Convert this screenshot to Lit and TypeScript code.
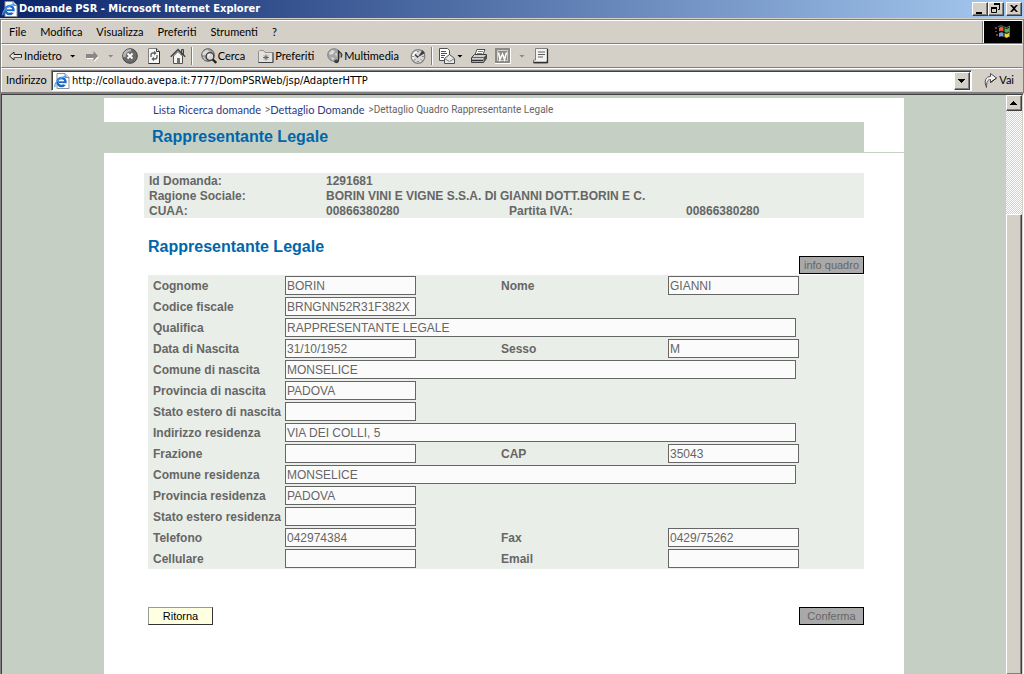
import { LitElement, html, css, svg, nothing, TemplateResult } from 'lit';
import { customElement, property } from 'lit/decorators.js';

type IconName =
  | 'ie' | 'back' | 'forward' | 'stop' | 'refresh' | 'home' | 'search' | 'favorites'
  | 'media' | 'history' | 'mail' | 'print' | 'word' | 'note' | 'go' | 'windows'
  | 'min' | 'restore' | 'close' | 'down' | 'up';

const ICONS: Record<IconName, TemplateResult> = {
  ie: svg`
    <path d="M3 0.5h8l4 4v11H3z" fill="#fff" stroke="#8a8f99"/>
    <path d="M11 0.5v4h4" fill="#d9dde6" stroke="#8a8f99"/>
    <circle cx="7.5" cy="9" r="4" fill="#fff" stroke="#1a66c8" stroke-width="2.4"/>
    <path d="M5 9.2h6.6" stroke="#1a66c8" stroke-width="1.8"/>
    <path d="M9.6 10.2h3v1.6h-3z" fill="#fff"/>
    <path d="M1.2 14.2C-.6 11.5 4.5 4.5 12.5 3.2" fill="none" stroke="#4aa0f0" stroke-width="1.3"/>`,
  back: svg`
    <path d="M2.5 8L7 4v2.500h7.500v3H7V12z" fill="#e8e6e0" stroke="#202020"/>
    <path d="M7 9.500h7.500" stroke="#606060"/>`,
  forward: svg`
    <path d="M15 9L10 14v-3H3v-3" fill="#fff"/>
    <path d="M14 8L9.500 3v3H2v4h7.500v3z" fill="#8a8884"/>`,
  stop: svg`
    <circle cx="8" cy="8" r="7.300" fill="#6b6b6b" stroke="#404040"/>
    <path d="M2.500 9A5.500 5.500 0 0 1 9 2.500" fill="none" stroke="#b8b8b8" stroke-width="2.500"/>
    <path d="M5.500 5.500l5 5m0-5l-5 5" stroke="#fff" stroke-width="1.800"/>`,
  refresh: svg`
    <path d="M2.500 .5h8l3 3v12h-11z" fill="#f6f6f4" stroke="#808080"/>
    <path d="M13.500 3.500v12h-11M10.500 .5v3h3" fill="none" stroke="#303030"/>
    <path d="M5 9V7a2 2 0 0 1 2-2h1.500M11 7v2a2 2 0 0 1-2 2H7.500" fill="none" stroke="#606060" stroke-width="1.300"/>
    <path d="M8 2.800L10.600 5 8 7.200zM8 8.800L5.400 11 8 13.200z" fill="#606060"/>`,
  home: svg`
    <path d="M3.500 8v7.500h9V8L8 3.500z" fill="#f4f4f2" stroke="#505050"/>
    <path d="M11.500 1.500h2v5h-2z" fill="#a0a0a0" stroke="#404040"/>
    <path d="M.8 8.800L8 1.600l7.200 7.200" fill="none" stroke="#404040" stroke-width="1.400"/>
    <path d="M7 10h3v5.500H7z" fill="#707070"/>`,
  search: svg`
    <circle cx="7" cy="7" r="6.300" fill="#9a9a9a" stroke="#606060"/>
    <path d="M2 4.500l4-2.500 2 1.500-3 3-3 .5zM2.500 9l2 3" fill="#d8d8d8" stroke="#d8d8d8"/>
    <circle cx="9" cy="8.500" r="3.800" fill="#d8d8d8" stroke="#404040" stroke-width="1.300"/>
    <path d="M7 8.500A2 2 0 0 1 9 6.500" fill="none" stroke="#fff"/>
    <path d="M11.800 11.500l3.400 3.500" stroke="#202020" stroke-width="2.400"/>`,
  favorites: svg`
    <path d="M.5 14.500v-11l1-1h4l1.500 2h8v10z" fill="#e4e2dc" stroke="#909090"/>
    <path d="M.5 14.500h14.500v-10" fill="none" stroke="#404040"/>
    <path d="M8 6.500v6M5 9.500h6M6 7.500l4 4m0-4l-4 4" stroke="#606060" stroke-width=".9"/>`,
  media: svg`
    <circle cx="7" cy="7" r="6.300" fill="#a6a6a6" stroke="#808080"/>
    <path d="M2 5l3-3 3 1-2 3-3 1zM4 9l3 1-1 3zM8 6l2-1-.5 4z" fill="#dcdcdc"/>
    <path d="M11.500 13V3l1.500 1.500c2 1 2.500 2.500 1 5" fill="none" stroke="#303030" stroke-width="1.200"/>
    <ellipse cx="9.500" cy="13.300" rx="2.300" ry="1.900" fill="#404040"/>`,
  history: svg`
    <circle cx="8" cy="8.500" r="6.800" fill="#d8d8d8" stroke="#808080" stroke-width="1.200"/>
    <path d="M3.500 11a5 5 0 0 1 3-7" fill="none" stroke="#fff" stroke-width="1.500"/>
    <path d="M8 3v1M8 13v1M2.500 8.500h1M12.500 8.500h1M4 12.500l1-1M12 12.500l-1-1" stroke="#404040"/>
    <path d="M7.500 9.500L12.500 2l2.500 3z" fill="#404040"/>
    <path d="M5 6.500l3 3" stroke="#303030" stroke-width="1.300"/>`,
  mail: svg`
    <path d="M.5 .5h8l2 2v10H.5z" fill="#fff" stroke="#505050"/>
    <path d="M2 3.500h5M2 5.500h6M2 7.500h4M2 9.500h3" stroke="#505050"/>
    <path d="M5.500 10.500l5-4 5 4v5h-10z" fill="#e8e8e8" stroke="#505050"/>
    <path d="M5.500 10.500l5 3 5-3" fill="none" stroke="#808080"/>`,
  print: svg`
    <path d="M4 6.500L6 1.500h8l-2 5z" fill="#fff" stroke="#505050"/>
    <path d="M7 3.500h5M6 5.500h5" stroke="#808080"/>
    <path d="M.5 9.500l3-3h12v4l-3 4H.5z" fill="#d0d0d0" stroke="#404040"/>
    <path d="M12.500 9.500l3-3v4l-3 4z" fill="#505050"/>
    <path d="M.5 9.500h12" stroke="#606060"/>
    <path d="M1 12.500h11" stroke="#303030" stroke-width="1.500"/>`,
  word: svg`
    <path d="M0 0h15v15H0z" fill="#8c8a86"/>
    <path d="M15.500 0v15.500H0" fill="none" stroke="#fff"/>
    <path d="M2.500 2.500h10v10h-10z" fill="none" stroke="#d4d0c8"/>
    <path d="M3.500 4.500l1.500 7L7.500 6l2 5.500 2-7" fill="none" stroke="#fff" stroke-width="1.600"/>`,
  note: svg`
    <path d="M2.500 .5h12v11.500l-1 3H.5v-3h2z" fill="#f2f2f0" stroke="#808080"/>
    <path d="M14.500 1v13.500H.5" fill="none" stroke="#303030" stroke-width="1.300"/>
    <path d="M5 4h7M5 6.500h7M5 9h5" stroke="#606060"/>`,
  go: svg`
    <path d="M4.500 15.500C1.500 9 4 4.500 8.500 4.500v-3L14.500 6l-6 4.500v-3c-3 0-4 2.500-4 8z" fill="#f4f4f4" stroke="#505050"/>
    <path d="M8.500 10.500l6-4.500" stroke="#202020"/>`,
  windows: svg`
    <path d="M0 3h2v2H0zM0 7h2v1H0zM1 10h2v2H1z" fill="#7a4038"/>
    <path d="M4 4c2-2 4-1 4.500 0v3.500c-1-1-3-1-4.500 0z" fill="#e85c3c"/>
    <path d="M9.500 4c1.500 1 3 1 4.500-.5v4c-1.500 1.500-3 1.500-4.500 .5z" fill="#52a84c"/>
    <path d="M4 9c2-1 4-1 4.500 0v4c-1-1-3-1-4.500 0z" fill="#6f9ee0"/>
    <path d="M9.500 9c1.500 1 3 1 4.500-.5v4c-1.500 1.500-3 1.500-4.500 .5z" fill="#f0d040"/>
    <path d="M3 3c3-2.500 5-.5 6 0s3 1 5.500-1v11" fill="none" stroke="#808890" stroke-width=".8"/>`,
  min: svg`<path d="M4 11h6v2H4z"/>`,
  restore: svg`
    <path d="M6.500 4v-.5h5v5H10" fill="none" stroke="#000"/><path d="M6 2h6v2H6z"/>
    <path d="M3.500 7.500h5v4h-5z" fill="none" stroke="#000"/><path d="M3 6h6v2H3z"/>`,
  close: svg`<path d="M4 4h2l2 2 2-2h2L9 7.500 12 11h-2L8 9l-2 2H4l3-3.500z"/>`,
  down: svg`<path d="M4 6h7v1H4zM5 7h5v1H5zM6 8h3v1H6zM7 9h1v1H7z"/>`,
  up: svg`<path d="M7 6h1v1H7zM6 7h3v1H6zM5 8h5v1H5zM4 9h7v1H4z"/>`,
};

@customElement('ui-icon')
class UiIcon extends LitElement {
  @property() name: IconName = 'ie';
  static styles = css`
    :host { display: inline-flex; flex: none; width: 16px; height: 16px; }
    svg { display: block; width: 100%; height: 100%; }
  `;
  render() {
    return html`<svg viewBox="0 0 16 16" aria-hidden="true">${ICONS[this.name]}</svg>`;
  }
}

interface Tool { icon?: IconName; label?: string; title?: string; arrow?: boolean; off?: boolean; sep?: boolean }

const MENU = ['File', 'Modifica', 'Visualizza', 'Preferiti', 'Strumenti', '?'];

const TOOLS: Tool[] = [
  { icon: 'back', label: 'Indietro', arrow: true },
  { icon: 'forward', title: 'Avanti', arrow: true, off: true },
  { icon: 'stop', title: 'Termina' },
  { icon: 'refresh', title: 'Aggiorna' },
  { icon: 'home', title: 'Pagina iniziale' },
  { sep: true },
  { icon: 'search', label: 'Cerca' },
  { icon: 'favorites', label: 'Preferiti' },
  { icon: 'media', label: 'Multimedia' },
  { icon: 'history', title: 'Cronologia' },
  { sep: true },
  { icon: 'mail', title: 'Posta', arrow: true },
  { icon: 'print', title: 'Stampa' },
  { icon: 'word', title: 'Modifica', arrow: true, off: true },
  { icon: 'note', title: 'Discussione' },
];

@customElement('browser-chrome')
class BrowserChrome extends LitElement {
  static styles = css`
    :host { display: block; background: #d4d0c8; color: #000; font: 11px/14px Lato, "DejaVu Sans Condensed", sans-serif; }
    button, input { font: inherit; color: inherit; border: 0; margin: 0; padding: 0; background: none; border-radius: 0; }
    .title { display: flex; align-items: center; gap: 1px; height: 18px; padding: 0 2px; background: linear-gradient(90deg, #0a246a, #a6caf0); color: #fff; font-family: "DejaVu Sans Condensed", "DejaVu Sans", sans-serif; font-weight: 700; }
    .title span { flex: 1; }
    .winbtns { display: flex; }
    .win { display: flex; align-items: center; justify-content: center; box-sizing: border-box; width: 16px; height: 14px; background: #d4d0c8; border: 1px solid; border-color: #fff #404040 #404040 #fff; box-shadow: inset -1px -1px #808080; overflow: hidden; }
    .winbtns .win:last-child { margin-left: 2px; }
    .bars { border: 1px solid #808080; margin-top: 1px; }
    .bar { display: flex; align-items: center; box-sizing: border-box; height: 24px; border: 1px solid; border-color: #fff #d4d0c8 #808080 #fff; }
    .menu { gap: 14px; padding-left: 7px; }
    .brand { display: flex; align-items: center; justify-content: center; align-self: stretch; width: 38px; margin-left: auto; background: #000; border-left: 1px solid #fff; box-shadow: -1px 0 #808080; }
    .tools { padding-left: 5px; }
    .tool { display: flex; align-items: center; gap: 1px; padding: 0 4px; height: 22px; }
    .labelled { padding: 0 7px 0 6px; }
    .tool:first-child { padding: 0 4px 0 0; }
    .arrow { width: 6px; height: 3px; margin-left: 7px; background: currentColor; clip-path: polygon(0 0, 100% 0, 50% 100%); }
    .tight .arrow { margin-left: 1px; }
    .off { color: #8a8884; }
    .sep { width: 1px; height: 18px; margin: 0 3px 0 1px; background: #808080; box-shadow: 1px 0 #fff; }
    .address { border-color: #fff #d4d0c8 #d4d0c8 #fff; padding-left: 4px; }
    .address label { flex: none; width: 45px; }
    .field { display: flex; flex: 1; align-items: center; box-sizing: border-box; height: 21px; background: #fff; border: 1px solid; border-color: #808080 #fff #fff #808080; box-shadow: inset 1px 1px #404040; padding: 1px 0 0 2px; gap: 2px; }
    .field input { flex: 1; min-width: 0; outline: 0; font-family: "DejaVu Sans Condensed", "DejaVu Sans", sans-serif; }
    .drop { height: 18px; margin-right: 1px; }
    .go { display: flex; align-items: center; gap: 1px; padding: 0 8px 0 10px; }
  `;
  render() {
    return html`
      <header class="title">
        <ui-icon name="ie"></ui-icon>
        <span>Domande PSR - Microsoft Internet Explorer</span>
        <div class="winbtns">
          <button class="win" aria-label="Riduci a icona"><ui-icon name="min"></ui-icon></button>
          <button class="win" aria-label="Ripristina"><ui-icon name="restore"></ui-icon></button>
          <button class="win" aria-label="Chiudi"><ui-icon name="close"></ui-icon></button>
        </div>
      </header>
      <div class="bars">
        <nav class="bar menu">
          ${MENU.map((m) => html`<button>${m}</button>`)}
          <span class="brand"><ui-icon name="windows"></ui-icon></span>
        </nav>
        <div class="bar tools">${TOOLS.map((t) => this.tool(t))}</div>
        <div class="bar address">
          <label for="url">Indirizzo</label>
          <div class="field">
            <ui-icon name="ie"></ui-icon>
            <input id="url" type="text" value="http://collaudo.avepa.it:7777/DomPSRWeb/jsp/AdapterHTTP">
            <button class="win drop" aria-label="Mostra indirizzi"><ui-icon name="down"></ui-icon></button>
          </div>
          <button class="go"><ui-icon name="go"></ui-icon>Vai</button>
        </div>
      </div>`;
  }
  private tool(t: Tool) {
    if (t.sep) return html`<span class="sep"></span>`;
    const cls = `tool${t.label ? ' labelled' : ''}${t.off ? ' off' : ''}${t.icon === 'mail' ? ' tight' : ''}`;
    return html`<button class=${cls} aria-label=${t.title ?? t.label ?? ''}>
      <ui-icon name=${t.icon!}></ui-icon>${t.label ?? nothing}${t.arrow ? html`<span class="arrow"></span>` : nothing}
    </button>`;
  }
}

interface Field { id: string; label: string; value: string; wide?: boolean }

const ROWS: Field[][] = [
  [{ id: 'cognome', label: 'Cognome', value: 'BORIN' }, { id: 'nome', label: 'Nome', value: 'GIANNI' }],
  [{ id: 'cf', label: 'Codice fiscale', value: 'BRNGNN52R31F382X' }],
  [{ id: 'qualifica', label: 'Qualifica', value: 'RAPPRESENTANTE LEGALE', wide: true }],
  [{ id: 'nascita', label: 'Data di Nascita', value: '31/10/1952' }, { id: 'sesso', label: 'Sesso', value: 'M' }],
  [{ id: 'comnas', label: 'Comune di nascita', value: 'MONSELICE', wide: true }],
  [{ id: 'provnas', label: 'Provincia di nascita', value: 'PADOVA' }],
  [{ id: 'statonas', label: 'Stato estero di nascita', value: '' }],
  [{ id: 'indres', label: 'Indirizzo residenza', value: 'VIA DEI COLLI, 5', wide: true }],
  [{ id: 'frazione', label: 'Frazione', value: '' }, { id: 'cap', label: 'CAP', value: '35043' }],
  [{ id: 'comres', label: 'Comune residenza', value: 'MONSELICE', wide: true }],
  [{ id: 'provres', label: 'Provincia residenza', value: 'PADOVA' }],
  [{ id: 'statores', label: 'Stato estero residenza', value: '' }],
  [{ id: 'telefono', label: 'Telefono', value: '042974384' }, { id: 'fax', label: 'Fax', value: '0429/75262' }],
  [{ id: 'cellulare', label: 'Cellulare', value: '' }, { id: 'email', label: 'Email', value: '' }],
];

@customElement('legal-page')
class LegalPage extends LitElement {
  static styles = css`
    :host { display: block; background: #c5cfc4; padding-top: 3px; font: 12px/15px "Liberation Sans", Arial, sans-serif; color: #666; }
    .sheet { max-width: 800px; min-height: 100%; margin: 0 auto; background: #fff; }
    .crumbs { display: flex; align-items: center; gap: 4px; height: 24px; padding: 0 0 0 49px; box-sizing: border-box; font: 11px/14px Lato, "DejaVu Sans Condensed", sans-serif; }
    .crumbs a { color: #2a3a84; text-decoration: none; }
    .crumbs small { font: 10px/14px Roboto, "DejaVu Sans Condensed", sans-serif; }
    .crumbs div { display: flex; align-items: center; }
    h1, h2 { margin: 0; color: #0066aa; font-size: 16px; line-height: 20px; }
    .banner { display: flex; height: 31px; }
    .banner h1 { flex: 1; background: #c5cfc4; padding: 5px 0 0 48px; }
    .banner span { width: 40px; box-sizing: border-box; border-bottom: 1px solid #c5cfc4; }
    .summary { display: grid; grid-template-columns: 177px 183px 177px 1fr; grid-auto-rows: 15px; line-height: 17px; margin: 20px 40px 0; padding-left: 5px; background: #e9eee8; font-weight: 700; }
    .summary dt, .summary dd { margin: 0; }
    .span { grid-column: span 3; }
    .body { margin: 18px 40px 0 44px; }
    .body h2 { padding-top: 1px; line-height: 19px; }
    .actions { display: flex; justify-content: space-between; }
    .right { display: flex; justify-content: flex-end; margin-bottom: 1px; }
    button { width: 65px; height: 18px; padding: 0; border: 1px solid #000; border-radius: 0; background: #a9a9a9; color: #666; font: 11px/14px "Liberation Sans", Arial, sans-serif; }
    .primary { background: #ffffe1; color: #000; border-color: #999 #333 #333 #999; }
    .panel { background: #e9eee8; margin-bottom: 38px; }
    .row { display: grid; grid-template-columns: 132px 216px 167px 1fr; align-items: center; height: 21px; padding-left: 5px; }
    label { font-weight: 700; line-height: 17px; padding-top: 1px; white-space: nowrap; }
    input { box-sizing: border-box; width: 131px; height: 19px; margin: 0; padding: 0 1px; border: 1px solid #666; border-radius: 0; background: #fbfbfb; color: #666; font: inherit; outline: 0; }
    .wide { grid-column: span 3; width: 511px; }
  `;
  render() {
    return html`
      <main class="sheet">
        <nav class="crumbs">
          <a href="#lista">Lista Ricerca domande</a>
          <div><small>&gt;</small><a href="#dettaglio">Dettaglio Domande</a></div>
          <small>&gt;Dettaglio Quadro Rappresentante Legale</small>
        </nav>
        <div class="banner"><h1>Rappresentante Legale</h1><span></span></div>
        <dl class="summary">
          <dt>Id Domanda:</dt><dd class="span">1291681</dd>
          <dt>Ragione Sociale:</dt><dd class="span">BORIN VINI E VIGNE S.S.A. DI GIANNI DOTT.BORIN E C.</dd>
          <dt>CUAA:</dt><dd>00866380280</dd><dt>Partita IVA:</dt><dd>00866380280</dd>
        </dl>
        <form class="body">
          <h2>Rappresentante Legale</h2>
          <div class="right"><button type="button" disabled>info quadro</button></div>
          <div class="panel">
            ${ROWS.map((row) => html`<div class="row">${row.map((f) => html`
              <label for=${f.id}>${f.label}</label>
              <input id=${f.id} type="text" class=${f.wide ? 'wide' : nothing} readonly .value=${f.value}>`)}</div>`)}
          </div>
          <div class="actions">
            <button type="button" class="primary">Ritorna</button>
            <button type="button" disabled>Conferma</button>
          </div>
        </form>
      </main>`;
  }
}

@customElement('app-root')
class AppRoot extends LitElement {
  static styles = css`
    :host { display: flex; flex-direction: column; height: 100vh; overflow: hidden; background: #d4d0c8; }
    .view { display: flex; flex: 1; min-height: 0; box-sizing: border-box; border: solid; border-width: 1px 1px 0; border-color: #808080 #fff #808080 #808080; box-shadow: inset 1px 1px #404040; padding: 1px 1px 0 1px; }
    legal-page { flex: 1; min-width: 0; overflow: hidden; }
    .scroll { display: flex; flex-direction: column; width: 16px; background: repeating-conic-gradient(#fff 0 25%, #d4d0c8 0 50%) 0 0 / 2px 2px; }
    .up, .thumb { box-sizing: border-box; width: 16px; padding: 0; background: #d4d0c8; border: 1px solid; border-color: #fff #404040 #404040 #fff; box-shadow: inset -1px -1px #808080; }
    .up { height: 16px; border-radius: 0; overflow: hidden; }
    .up ui-icon { display: flex; margin: -1px; }
    .thumb { flex: 1; margin-top: 103px; border-bottom: 0; }
  `;
  render() {
    return html`
      <browser-chrome></browser-chrome>
      <div class="view">
        <legal-page></legal-page>
        <div class="scroll">
          <button class="up" aria-label="Scorri in alto"><ui-icon name="up"></ui-icon></button>
          <div class="thumb"></div>
        </div>
      </div>`;
  }
}
